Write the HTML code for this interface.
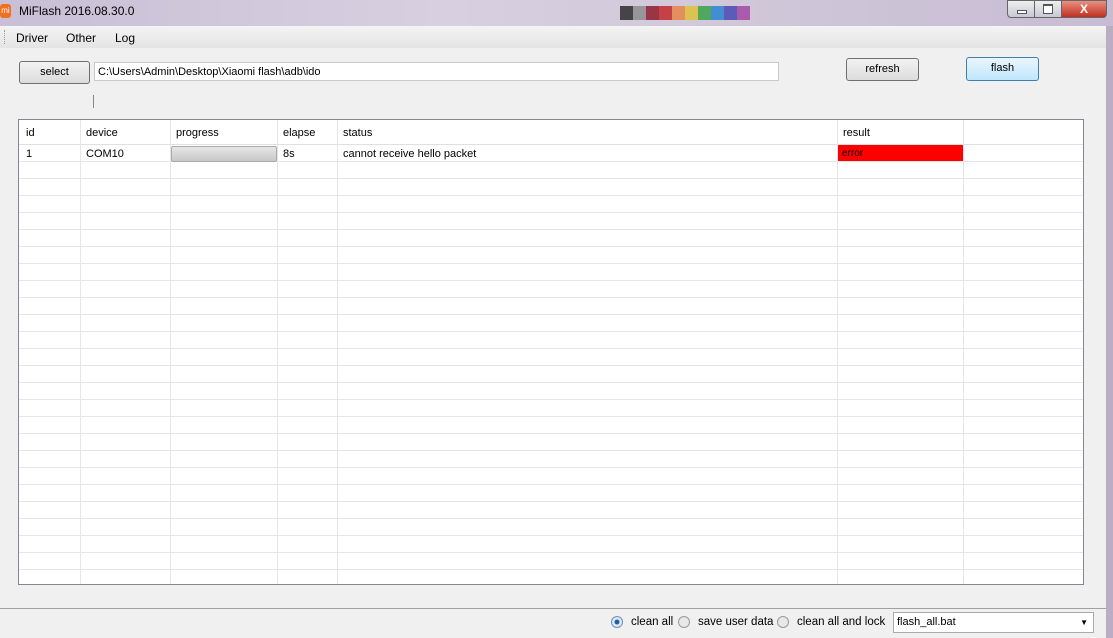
<!DOCTYPE html>
<html><head><style>
body{margin:0;width:1113px;height:638px;overflow:hidden;font-family:"Liberation Sans",sans-serif;font-size:11px;background:#b9aec4;position:relative}
.a{position:absolute}
.btn{position:absolute;background:linear-gradient(#f2f2f2,#dcdcdc);border:1px solid #707070;border-radius:3px;text-align:center;line-height:20px;font-size:11px;color:#000}
.c{position:absolute;top:0;height:100%;border-left:1px solid #e6e6e6}
.r{position:absolute;left:0;width:100%;border-top:1px solid #e6e6e6}
</style></head><body>
<div class="a" style="left:0;top:0;width:1113px;height:26px;background:linear-gradient(90deg,#c9bfd6,#d8d0e0 40%,#cfc6d8 70%,#c8bcd4)"></div>
<div class="a" style="left:0;top:4px;width:11px;height:14px;background:#f07020;border-radius:3px;color:#fff;font-size:8px;line-height:14px;text-align:center">mi</div>
<div class="a" style="left:19px;top:4px;font-size:12px;color:#000">MiFlash 2016.08.30.0</div>
<div class="a" style="left:620px;top:6px;width:260px;height:14px;background:linear-gradient(90deg,#222 0 5%,#888 5% 10%,#8a1020 10% 15%,#c02020 15% 20%,#e88040 20% 25%,#e0c030 25% 30%,#30a040 30% 35%,#2080d0 35% 40%,#4040b0 40% 45%,#a040a0 45% 50%,transparent 50%);opacity:.8"></div>
<div class="a" style="left:1007px;top:0;width:26px;height:16px;background:linear-gradient(#eee,#c8c8d8);border:1px solid #666;border-radius:0 0 0 4px"><div class="a" style="left:9px;top:9px;width:8px;height:2px;border:1px solid #555;background:#fff"></div></div>
<div class="a" style="left:1034px;top:0;width:26px;height:16px;background:linear-gradient(#eee,#c8c8d8);border:1px solid #666"><div class="a" style="left:8px;top:3px;width:8px;height:7px;border:1px solid #555;border-top-width:2px;background:#fff"></div></div>
<div class="a" style="left:1061px;top:0;width:44px;height:16px;background:linear-gradient(#e89080,#c03020);border:1px solid #666;border-radius:0 0 4px 0;color:#fff;text-align:center;font-weight:bold;line-height:16px;font-size:12px">X</div>
<div class="a" style="left:0;top:26px;width:1106px;height:612px;background:#f0f0f0"></div>
<div class="a" style="left:0;top:26px;width:1106px;height:22px;background:linear-gradient(#f4f4f4,#e4e4e4)"></div>
<div class="a" style="left:4px;top:30px;height:14px;border-left:1px dotted #999"></div>
<div class="a" style="left:16px;top:31px;font-size:12px">Driver</div>
<div class="a" style="left:66px;top:31px;font-size:12px">Other</div>
<div class="a" style="left:115px;top:31px;font-size:12px">Log</div>
<div class="btn" style="left:19px;top:61px;width:69px;height:21px">select</div>
<div class="a" style="left:94px;top:62px;width:685px;height:19px;background:#fff;border:1px solid #c8c8c8;line-height:19px;padding-left:3px;box-sizing:border-box">C:\Users\Admin\Desktop\Xiaomi flash\adb\ido</div>
<div class="btn" style="left:846px;top:58px;width:71px;height:21px">refresh</div>
<div class="btn" style="left:966px;top:57px;width:71px;height:22px;border-color:#3c7fb1;background:linear-gradient(#eaf6fd,#bee6fd)">flash</div>
<div class="a" style="left:93px;top:95px;height:13px;border-left:1px solid #888"></div>
<div class="a" style="left:18px;top:119px;width:1066px;height:466px;background:#fff;border:1px solid #828790;box-sizing:border-box;overflow:hidden">
<div class="a" style="left:0;top:0;width:100%;height:24px;background:#fff;border-bottom:1px solid #e0e0e0"></div>
<div class="c" style="left:61px"></div><div class="c" style="left:151px"></div><div class="c" style="left:258px"></div><div class="c" style="left:318px"></div><div class="c" style="left:818px"></div><div class="c" style="left:944px"></div>
<div class="r" style="top:41px"></div><div class="r" style="top:58px"></div><div class="r" style="top:75px"></div><div class="r" style="top:92px"></div><div class="r" style="top:109px"></div><div class="r" style="top:126px"></div><div class="r" style="top:143px"></div><div class="r" style="top:160px"></div><div class="r" style="top:177px"></div><div class="r" style="top:194px"></div><div class="r" style="top:211px"></div><div class="r" style="top:228px"></div><div class="r" style="top:245px"></div><div class="r" style="top:262px"></div><div class="r" style="top:279px"></div><div class="r" style="top:296px"></div><div class="r" style="top:313px"></div><div class="r" style="top:330px"></div><div class="r" style="top:347px"></div><div class="r" style="top:364px"></div><div class="r" style="top:381px"></div><div class="r" style="top:398px"></div><div class="r" style="top:415px"></div><div class="r" style="top:432px"></div><div class="r" style="top:449px"></div>
<div class="a" style="left:7px;top:7px">id</div><div class="a" style="left:67px;top:7px">device</div><div class="a" style="left:157px;top:7px">progress</div><div class="a" style="left:264px;top:7px">elapse</div><div class="a" style="left:324px;top:7px">status</div><div class="a" style="left:824px;top:7px">result</div>
<div class="a" style="left:7px;top:28px">1</div><div class="a" style="left:67px;top:28px">COM10</div>
<div class="a" style="left:152px;top:26px;width:104px;height:14px;border:1px solid #aaa;border-radius:2px;background:linear-gradient(#e6e6e6,#c8c8c8)"></div>
<div class="a" style="left:264px;top:28px">8s</div><div class="a" style="left:324px;top:28px">cannot receive hello packet</div>
<div class="a" style="left:819px;top:25px;width:125px;height:16px;background:#ff0000;font-size:10px;line-height:17px;padding-left:4px;box-sizing:border-box">error</div>
</div>
<div class="a" style="left:0;top:608px;width:1106px;height:1px;background:#a0a0a0"></div>
<div class="a" style="left:611px;top:616px;width:10px;height:10px;border:1px solid #6a8fb8;border-radius:50%;background:radial-gradient(#1a5fa8 30%,#dfe9f5 40%)"></div>
<div class="a" style="left:631px;top:616px;font-size:11.5px">clean all</div>
<div class="a" style="left:678px;top:616px;width:10px;height:10px;border:1px solid #999;border-radius:50%;background:#e8e8e8"></div>
<div class="a" style="left:698px;top:616px;font-size:11.5px">save user data</div>
<div class="a" style="left:777px;top:616px;width:10px;height:10px;border:1px solid #999;border-radius:50%;background:#e8e8e8"></div>
<div class="a" style="left:797px;top:616px;font-size:11.5px">clean all and lock</div>
<div class="a" style="left:893px;top:612px;width:201px;height:21px;background:#fff;border:1px solid #aaa;box-sizing:border-box;padding-left:3px;line-height:19px">flash_all.bat<span style="position:absolute;right:5px;font-size:8px">▼</span></div>
</body></html>
